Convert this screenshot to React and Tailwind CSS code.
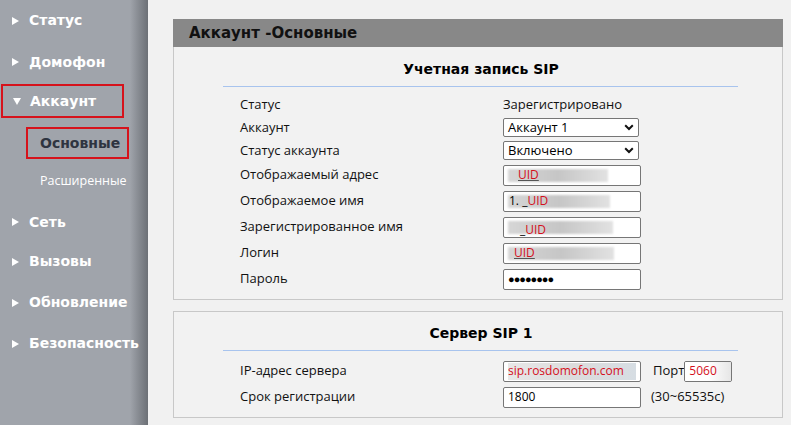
import React from "react";

const sans = "font-['Open_Sans',sans-serif]";
const bold = "font-['DejaVu_Sans',sans-serif] font-bold";

function Tri({ down }) {
  return (
    <span className="inline-flex w-[17px] items-center">
      {down ? (
        <svg width="8" height="7" viewBox="0 0 8 7">
          <path d="M0 0 L8 0 L4 7 Z" fill="#fff" />
        </svg>
      ) : (
        <svg width="7" height="8" viewBox="0 0 7 8">
          <path d="M0 0 L7 4 L0 8 Z" fill="#fff" />
        </svg>
      )}
    </span>
  );
}

function NavItem({ label, h }) {
  return (
    <div className={`flex items-center pl-[12px] ${h}`}>
      <Tri />
      <span className={`${bold} text-[14px] text-white`}>{label}</span>
    </div>
  );
}

function Blur({ w, children, red = true, extra = "" }) {
  return (
    <div className="relative flex h-full items-center pl-[4px]">
      <div className={`absolute left-[4px] top-[3px] h-[13px] ${w} bg-gradient-to-r from-[#d6d6d6] via-[#c6c6c6] to-[#e2e2e2] blur-[1px]`} />
      <span className={`relative text-[12px] ${red ? "text-[#d4101c]" : "text-black"} ${extra}`}>{children}</span>
    </div>
  );
}

function Select({ value }) {
  return (
    <div className="flex h-[19px] w-[136px] items-center justify-between rounded-[2px] border border-[#767676] bg-white pl-[4px] pr-[4px]">
      <span className="text-[13px] leading-none text-black">{value}</span>
      <svg width="10" height="7" viewBox="0 0 10 7">
        <path d="M1.2 1.3 L5 5 L8.8 1.3" fill="none" stroke="#111" strokeWidth="2" />
      </svg>
    </div>
  );
}

function Input({ w = "w-[138px]", children }) {
  return (
    <div className={`h-[21px] ${w} overflow-hidden rounded-[2px] border border-[#767676] bg-white`}>
      {children}
    </div>
  );
}

function Row({ label, h = "h-[26px]", children }) {
  return (
    <div className={`grid grid-cols-[263px_1fr] items-center ${h}`}>
      <span className="text-[13px] text-[#111]">{label}</span>
      <div className="flex items-center">{children}</div>
    </div>
  );
}

export default function App() {
  return (
    <div className={`flex h-[425px] w-[791px] overflow-hidden bg-[#f1f1f1] ${sans}`}>
      {/* Sidebar */}
      <div className="relative w-[148px] shrink-0 bg-[#a0a4ab]">
        <div className="absolute right-0 top-0 h-full w-[18px] bg-gradient-to-r from-[#a0a4ab] to-[#6c7076]" />
        <div className="relative flex flex-col">
          <NavItem label="Статус" h="h-[41px]" />
          <NavItem label="Домофон" h="h-[42px]" />
          <div className="ml-[1px] mt-[1px] flex h-[34px] w-[123px] items-center border-2 border-[#d6121b] pl-[10px]">
            <Tri down />
            <span className={`${bold} text-[14px] text-white`}>Аккаунт</span>
          </div>
          <div className="ml-[26px] mt-[9px] flex h-[32px] w-[103px] items-center border-2 border-[#d6121b] pl-[12px]">
            <span className={`${bold} text-[14px] text-[#2e3440]`}>Основные</span>
          </div>
          <div className="flex h-[44px] items-center pl-[40px]">
            <span className="text-[12.5px] text-white">Расширенные</span>
          </div>
          <NavItem label="Сеть" h="h-[38px]" />
          <NavItem label="Вызовы" h="h-[41px]" />
          <NavItem label="Обновление" h="h-[41px]" />
          <NavItem label="Безопасность" h="h-[41px]" />
        </div>
      </div>

      {/* Main */}
      <div className="flex flex-1 flex-col pl-[25px] pr-[8px] pt-[19px]">
        <div className="flex h-[28px] items-center bg-[#888888] pl-[16px] pt-[1px]">
          <span className={`${bold} text-[15px] text-[#111]`}>Аккаунт -Основные</span>
        </div>

        {/* Panel 1 */}
        <div className="flex h-[253px] flex-col border border-t-0 border-[#c8c8c8] bg-[#f2f2f2]">
          <div className="flex h-[39px] items-end justify-center pb-[6px] pl-[6px]">
            <span className={`${bold} text-[14px] text-black`}>Учетная запись SIP</span>
          </div>
          <div className="ml-[49px] mr-[44px] h-px bg-[#a8c4ee]" />
          <div className="flex flex-col pl-[66px] pt-[7px]">
            <Row label="Статус" h="h-[22px]">
              <span className="text-[13px] text-[#111]">Зарегистрировано</span>
            </Row>
            <Row label="Аккаунт" h="h-[23px]">
              <Select value="Аккаунт 1" />
            </Row>
            <Row label="Статус аккаунта" h="h-[23px]">
              <Select value="Включено" />
            </Row>
            <Row label="Отображаемый адрес">
              <Input>
                <Blur w="w-[100px]" extra="pl-[10px] underline decoration-[#555]">UID</Blur>
              </Input>
            </Row>
            <Row label="Отображаемое имя">
              <Input>
                <Blur w="w-[102px]" extra="pl-[1px]">
                  <span className="text-black">1. _</span>UID
                </Blur>
              </Input>
            </Row>
            <Row label="Зарегистрированное имя">
              <Input>
                <Blur w="w-[105px]" extra="pl-[12px] pt-[5px]">
                  <span className="text-black">_</span>UID
                </Blur>
              </Input>
            </Row>
            <Row label="Логин">
              <Input>
                <Blur w="w-[106px]" extra="pl-[6px] underline decoration-[#555]">UID</Blur>
              </Input>
            </Row>
            <Row label="Пароль">
              <Input>
                <div className="flex h-full items-center pl-[4px] text-[11px] tracking-[-1px] text-black">
                  ●●●●●●●●
                </div>
              </Input>
            </Row>
          </div>
        </div>

        {/* Panel 2 */}
        <div className="mt-[11px] flex h-[107px] flex-col border border-[#c8c8c8] bg-[#f2f2f2]">
          <div className="flex h-[38px] items-end justify-center pb-[6px] pl-[6px]">
            <span className={`${bold} text-[14px] text-black`}>Сервер SIP 1</span>
          </div>
          <div className="ml-[49px] mr-[44px] h-px bg-[#a8c4ee]" />
          <div className="flex flex-col pl-[66px] pt-[7px]">
            <Row label="IP-адрес сервера">
              <Input>
                <div className="relative flex h-full items-center pl-[4px]">
                  <div className="absolute left-[4px] top-[1px] h-[17px] w-[128px] bg-gradient-to-r from-[#e8e8e8] via-[#dcdcdc] to-[#d6dde3]" />
                  <span className="relative text-[12px] text-[#d4101c]">sip.rosdomofon.com</span>
                </div>
              </Input>
              <span className="ml-[12px] text-[13px] text-[#111]">Порт</span>
              <Input w="w-[48px]">
                <div className="flex h-full items-center bg-gradient-to-r from-white via-white to-[#e6e6e6] pl-[4px]">
                  <span className="text-[12px] text-[#d4101c]">5060</span>
                </div>
              </Input>
            </Row>
            <Row label="Срок регистрации">
              <Input>
                <div className="flex h-full items-center pl-[4px]">
                  <span className="text-[12px] text-black">1800</span>
                </div>
              </Input>
              <span className="ml-[10px] text-[13px] text-[#111]">(30~65535с)</span>
            </Row>
          </div>
        </div>
      </div>
    </div>
  );
}
